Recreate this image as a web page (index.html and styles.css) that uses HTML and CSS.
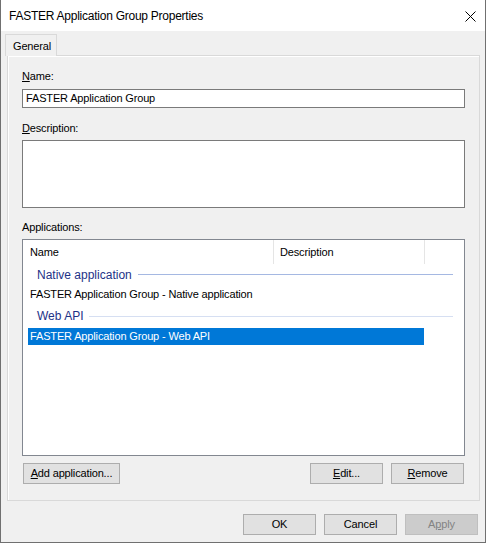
FILE: index.html
```html
<!DOCTYPE html>
<html>
<head>
<meta charset="utf-8">
<link rel="stylesheet" href="styles.css">
</head>
<body>
<div class="window">
  <div class="titlebar">
    <span class="title">FASTER Application Group Properties</span>
    <svg class="close" width="11" height="11" viewBox="0 0 11 11"><path d="M0.5 0.5 L10.5 10.5 M10.5 0.5 L0.5 10.5" stroke="#000" stroke-width="1" fill="none"/></svg>
  </div>
  <div class="client">
    <div class="tabs"><div class="tab">General</div></div>
    <div class="page">
      <div class="label label-first"><u>N</u>ame:</div>
      <div class="textbox">FASTER Application Group</div>
      <div class="label"><u>D</u>escription:</div>
      <div class="textarea"></div>
      <div class="label">Applications:</div>
      <div class="listview">
        <div class="lv-header">
          <div class="col col-name">Name</div>
          <div class="col col-desc">Description</div>
        </div>
        <div class="group group-first"><span class="group-text">Native application</span><span class="group-line line-strong"></span></div>
        <div class="item">FASTER Application Group - Native application</div>
        <div class="group group-second"><span class="group-text">Web API</span><span class="group-line line-light"></span></div>
        <div class="item selected">FASTER Application Group - Web API</div>
      </div>
      <div class="page-buttons">
        <div class="btn btn-add"><u>A</u>dd application...</div>
        <div class="spacer"></div>
        <div class="btn btn-small"><u>E</u>dit...</div>
        <div class="btn btn-small btn-remove"><u>R</u>emove</div>
      </div>
    </div>
    <div class="dialog-buttons">
      <div class="btn btn-small">OK</div>
      <div class="btn btn-small">Cancel</div>
      <div class="btn btn-small btn-disabled">A<u>p</u>ply</div>
    </div>
  </div>
</div>
</body>
</html>
```

FILE: styles.css
```css
* { box-sizing: border-box; }
html, body { margin: 0; padding: 0; }
body {
  font-family: "Liberation Sans", Arial, sans-serif;
  font-size: 11px;
  letter-spacing: -0.15px;
  color: #000;
  background: #fff;
}
u { text-decoration: underline; text-underline-offset: 1px; }
.window {
  width: 486px;
  height: 543px;
  border-left: 1px solid #707070;
  border-right: 1px solid #707070;
  border-bottom: 1px solid #707070;
  display: flex;
  flex-direction: column;
}
.titlebar {
  height: 31px;
  background: #fff;
  display: flex;
  align-items: center;
  justify-content: space-between;
  padding: 0 9px 0 8px;
  flex: none;
}
.title { font-size: 12px; letter-spacing: -0.25px; line-height: 16px; padding-top: 1px; }
.close { display: block; margin-top: 1px; }
.client {
  flex: 1;
  background: #f0f0f0;
  display: flex;
  flex-direction: column;
}
.tabs {
  padding: 3px 0 0 4px;
  display: flex;
  height: 25px;
  flex: none;
}
.tab {
  position: relative;
  z-index: 1;
  width: 52px;
  height: 22px;
  border: 1px solid #d9d9d9;
  border-bottom: none;
  background: #f0f0f0;
  padding: 4px 0 0 7px;
  line-height: 14px;
}
.page {
  margin: -1px 0 0 6px;
  width: 473px;
  height: 446px;
  border: 1px solid #d9d9d9;
  box-shadow: inset 1px 1px 0 #fff;
  padding: 13px 14px 0 14px;
  display: flex;
  flex-direction: column;
  flex: none;
}
.label { line-height: 14px; height: 14px; margin-top: 13px; }
.label-first { margin-top: 0; }
.textbox {
  margin-top: 6px;
  height: 19px;
  border: 1px solid #7a7a7a;
  background: #fff;
  padding: 0 3px;
  line-height: 17px;
}
.textarea {
  margin-top: 5px;
  height: 68px;
  border: 1px solid #7a7a7a;
  background: #fff;
}
.label + .textarea, .label + .listview { margin-top: 5px; }
.textarea + .label { margin-top: 12px; }
.listview {
  height: 217px;
  border: 1px solid #828790;
  background: #fff;
  display: flex;
  flex-direction: column;
}
.lv-header {
  height: 24px;
  display: flex;
  flex: none;
}
.col {
  height: 24px;
  line-height: 24px;
  padding-left: 7px;
  border-right: 1px solid #e5e5e5;
}
.col-name { width: 251px; }
.col-desc { width: 151px; padding-left: 6px; }
.group {
  display: flex;
  align-items: center;
  padding-left: 14px;
  padding-right: 11px;
  color: #1e3287;
  font-size: 12px;
  letter-spacing: 0;
  flex: none;
}
.group-first { margin-top: 1px; height: 19px; }
.group-second { height: 22px; }
.group-text { line-height: 14px; }
.group-line { flex: 1; height: 1px; margin-left: 6px; }
.line-strong { background: #a5b8e2; }
.line-light { background: #d6dff2; }
.item {
  height: 21px;
  line-height: 21px;
  padding-left: 7px;
  flex: none;
}
.item.selected {
  margin: 1px 0 0 5px;
  width: 396px;
  height: 17px;
  line-height: 17px;
  padding-left: 2px;
  background: #0078d7;
  color: #fff;
}
.page-buttons {
  display: flex;
  margin-top: 7px;
  padding: 0 1px;
}
.spacer { flex: 1; }
.btn {
  height: 21px;
  border: 1px solid #adadad;
  background: #e1e1e1;
  line-height: 19px;
  text-align: center;
}
.btn-add { width: 97px; }
.btn-small { width: 73px; }
.btn-remove { margin-left: 8px; }
.dialog-buttons {
  display: flex;
  justify-content: flex-end;
  gap: 8px;
  margin-top: 13px;
  padding-right: 7px;
}
.btn-disabled {
  background: #cccccc;
  border-color: #bfbfbf;
  color: #838383;
}
```
